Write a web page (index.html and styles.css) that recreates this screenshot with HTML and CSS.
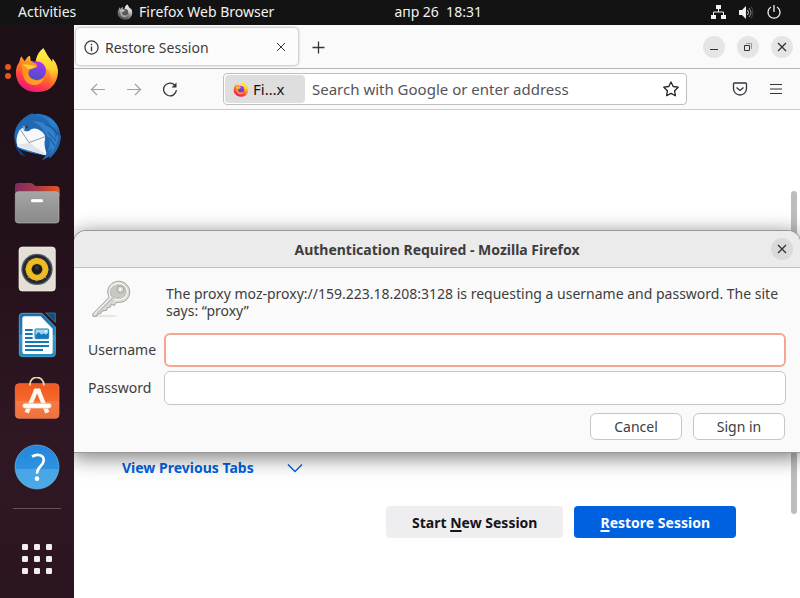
FILE: index.html
```html
<!DOCTYPE html>
<html lang="en">
<head>
<meta charset="utf-8">
<title>Restore Session</title>
<link rel="stylesheet" href="styles.css">
</head>
<body>
<svg class="defs" aria-hidden="true">
  <defs>
    <linearGradient id="fire" x1=".75" y1="0" x2=".3" y2="1"><stop offset="0" stop-color="#fff44f"/><stop offset=".3" stop-color="#ffbd2e"/><stop offset=".6" stop-color="#ff6a2b"/><stop offset=".82" stop-color="#ff3350"/><stop offset="1" stop-color="#e31587"/></linearGradient>
    <linearGradient id="flame" x1="0" y1="0" x2="0" y2="1"><stop offset="0" stop-color="#fff14a"/><stop offset=".55" stop-color="#ffd02e"/><stop offset="1" stop-color="#ff7139" stop-opacity=".2"/></linearGradient>
    <linearGradient id="globe" x1=".7" y1="0" x2=".4" y2="1"><stop offset="0" stop-color="#b833e1"/><stop offset=".5" stop-color="#7542e5"/><stop offset="1" stop-color="#4a4fb5"/></linearGradient>
    <linearGradient id="fox" x1="0" y1="0" x2="1" y2="1"><stop offset="0" stop-color="#ff8a16"/><stop offset="1" stop-color="#ffb42a"/></linearGradient>
    <symbol id="firefox" viewBox="46 66 130 138">
      <path fill="url(#fire)" d="M64 94 74 109Q81 94 90 92L92 107Q99 109 106 112L110 97Q114 84 130 70L136 80Q142 91 145 95L157 112L158 101Q174 119 174 141Q173 172 151 190Q133 203 105 201Q74 199 57 176Q46 158 48 135Q50 121 58 111Q60 101 64 94Z"/>
      <path fill="url(#flame)" d="M130 70 136 80Q142 91 145 95L157 112L158 101Q177 125 171 155Q165 178 146 185Q160 160 146 138Q138 126 118 116L108 110Q111 84 130 70Z"/>
      <circle cx="110" cy="137" r="28" fill="url(#globe)"/>
      <path fill="url(#fox)" d="M64 110Q80 104 91 110L106 115Q114 122 110 127Q99 131 90 133Q80 147 92 159Q111 174 133 158Q124 181 99 180Q74 175 69 149Q65 128 64 110Z" opacity=".92"/>
      <path fill="#ffcf35" d="M64 119Q83 116 109 124Q96 133 83 133Q80 124 64 119Z"/>
    </symbol>
    <linearGradient id="tb" x1="0" y1="0" x2="1" y2="1"><stop offset="0" stop-color="#1761ab"/><stop offset=".55" stop-color="#2c83d4"/><stop offset="1" stop-color="#102d77"/></linearGradient>
    <linearGradient id="folder"><stop stop-color="#812b62"/><stop offset=".5" stop-color="#a73b48"/><stop offset="1" stop-color="#e95420"/></linearGradient>
    <linearGradient id="metal" x2="0" y2="1"><stop stop-color="#a5a5a5"/><stop offset="1" stop-color="#898989"/></linearGradient>
    <linearGradient id="writer" x2="0" y2="1"><stop stop-color="#1a6eaa"/><stop offset=".5" stop-color="#2283bb"/><stop offset=".51" stop-color="#379fce"/><stop offset="1" stop-color="#2589be"/></linearGradient>
    <linearGradient id="bag" x2="0" y2="1"><stop stop-color="#ed581f"/><stop offset=".5" stop-color="#f56a2c"/><stop offset=".51" stop-color="#f57b45"/><stop offset="1" stop-color="#ee713d"/></linearGradient>
    <linearGradient id="help" x2="0" y2="1"><stop stop-color="#2385dc"/><stop offset=".54" stop-color="#2c93df"/><stop offset=".55" stop-color="#49a5e5"/><stop offset="1" stop-color="#4baae7"/></linearGradient>
    <radialGradient id="cone"><stop offset=".3" stop-color="#cda012"/><stop offset=".65" stop-color="#f0bf25"/><stop offset="1" stop-color="#e8b51e"/></radialGradient>
    <linearGradient id="keymetal" x1="0" y1="0" x2="1" y2="1"><stop stop-color="#fafaf8"/><stop offset=".5" stop-color="#d5d5d0"/><stop offset="1" stop-color="#eeeeeb"/></linearGradient>
    <symbol id="close" viewBox="0 0 16 16"><path d="M4 4 12 12M12 4 4 12" fill="none" stroke="currentColor"/></symbol>
  </defs>
</svg>

<header class="topbar">
  <button class="activities">Activities</button>
  <button class="app-menu"><svg class="app-icon" aria-hidden="true"><use href="#firefox"/></svg>Firefox Web Browser</button>
  <time class="clock">апр 26&nbsp; 18:31</time>
  <div class="status">
    <svg viewBox="0 0 16 16" aria-hidden="true"><path fill="#f2f2f2" d="M6 1h5v4H6zM1 11h5v4H1zM11 11h5v4h-5z"/><path d="M8.500 5v3M3.500 11V8h10v3" fill="none" stroke="#f2f2f2"/></svg>
    <svg viewBox="0 0 16 16" aria-hidden="true"><path fill="#f2f2f2" d="M1 6h3l4-4v13l-4-4H1z"/><path d="M9.500 6q2 2.500 0 5" fill="none" stroke="#ddd"/><path d="M11 4q4 4.500 0 9" fill="none" stroke="#999"/><path d="M13 2.500q4 6 0 12" fill="none" stroke="#444"/></svg>
    <svg viewBox="0 0 16 16" aria-hidden="true"><path d="M8 1v7M5 3a6 6 0 1 0 6 0" fill="none" stroke="#f2f2f2" stroke-width="1.300"/></svg>
  </div>
</header>

<div class="desktop">
  <nav class="dock" aria-label="Dock">
    <button class="launcher running" aria-label="Firefox"><svg viewBox="39 66 144 144"><use href="#firefox" x="46" y="66" width="130" height="138"/></svg></button>
    <button class="launcher" aria-label="Thunderbird"><svg viewBox="39 264 144 144">
      <circle cx="112" cy="335" r="69" fill="url(#tb)"/>
      <path fill="#21121b" d="M48 366Q75 383 139 392L124 412H60Z"/>
      <path fill="#173d89" d="M46 337Q41 367 62 389L78 394Q61 381 55 366L48 350Z"/>
      <path fill="#f7f8fa" d="M57 318Q61 309 75 308L127 309Q138 317 135 343Q130 359 140 386L136 391Q83 376 53 366Q44 344 57 318Z"/>
      <path fill="#e1e4ea" d="M50 360 88 353 136 386V391Q90 378 50 360Z"/>
      <path d="M60 312 87 353 138 334" fill="none" stroke="#959aa2" stroke-width="3"/>
      <path fill="#2268b1" d="M85 270 99 264Q96 269 109 273Q139 277 151 298Q172 315 183 333Q181 365 162 387L148 402L149 393L125 407L137 391Q149 370 136 354Q142 326 117 314Q98 306 88 317Q76 321 71 316L75 308Q55 305 61 293Q70 278 85 270Z"/>
      <path fill="#3c92dc" d="M97 288Q132 289 151 306Q168 320 165 342L176 325Q171 370 151 388L157 370L144 379Q157 350 139 330Q127 303 97 288Z" opacity=".6"/>
      <path d="M135 298Q153 303 177 330M143 321 168 348M147 337 165 363" fill="none" stroke="#164e9a" stroke-width="3"/>
      <path fill="#79a8c5" d="M67 302 76 304 73 320Z"/><circle cx="80" cy="306" r="4" fill="#223d4f"/>
    </svg></button>
    <button class="launcher" aria-label="Files"><svg viewBox="39 27 144 144">
      <path fill="url(#folder)" d="M45 77V49Q45 39 55 39H91Q99 39 106 48H168Q179 48 179 60V77Z"/>
      <rect x="46" y="65" width="131" height="94" rx="9" fill="url(#metal)" stroke="#b5b5b5" stroke-width="2"/>
      <rect x="92" y="86" width="38" height="12" rx="4" fill="#fff" stroke="#888" stroke-width="2"/>
    </svg></button>
    <button class="launcher" aria-label="Rhythmbox"><svg viewBox="39 225 144 144">
      <rect x="57" y="231" width="109" height="132" rx="10" fill="#e5e0d6" stroke="#f7f4ee" stroke-width="2"/>
      <circle cx="111" cy="298" r="47" fill="#555c66"/><circle cx="111" cy="298" r="43" fill="#242833"/>
      <circle cx="111" cy="298" r="34" fill="url(#cone)"/><circle cx="111" cy="298" r="16" fill="#1b1c20"/><circle cx="111" cy="293" r="7" fill="#33353a"/>
      <path d="M108 266v-3M133 275l2-2M143 298h3M135 321l3 3M109 331v3M86 321l-3 3M78 298h-3M87 275l-3-3" stroke="#ffde60" stroke-width="2"/>
    </svg></button>
    <button class="launcher" aria-label="LibreOffice Writer"><svg viewBox="39 33 144 144">
      <path fill="url(#writer)" stroke="#45a3d2" stroke-width="3" d="M68 40H126L166 81V161Q166 170 157 170H68Q58 170 58 161V49Q58 40 68 40Z"/>
      <path fill="#fff" d="M73 49H122L158 86V157Q158 162 152 162H73Q67 162 67 156V55Q67 49 73 49Z"/>
      <path fill="#0e4f7b" stroke="#4493bf" stroke-width="2" d="M137 39H166V67Z"/>
      <path stroke="#1278b5" stroke-width="6" d="M75 90H98M75 102H98M75 114H98M75 126H147M75 138H147M75 150H129"/>
      <rect x="105" y="87" width="41" height="29" rx="3" fill="#a7d4ed" stroke="#147ab4" stroke-width="3"/>
      <path fill="#147ab4" d="M107 115V105L116 96 124 104 131 100 137 104 145 98V115Z"/><circle cx="137" cy="94" r="3" fill="#fff"/>
    </svg></button>
    <button class="launcher" aria-label="Ubuntu Software"><svg viewBox="39 231 144 144">
      <rect x="46" y="251" width="131" height="104" rx="11" fill="url(#bag)" stroke="#ff8458" stroke-width="2"/>
      <path d="M90 257C86 226 132 222 132 257" fill="none" stroke="#efd8aa" stroke-width="5"/>
      <path d="M80 338 108 272H115L142 338" fill="none" stroke="#fff7ee" stroke-width="13"/>
      <path fill="#fff7ee" d="M102 267H121L124 279H99Z"/>
      <rect x="68" y="310" width="86" height="15" rx="7" fill="#fff" stroke="#f4a17d" stroke-width="2"/>
    </svg></button>
    <button class="launcher" aria-label="Help"><svg viewBox="39 39 144 144">
      <circle cx="111" cy="111" r="66" fill="url(#help)" stroke="#69bced" stroke-width="2"/>
      <path d="M96 80C111 70 133 74 131 92C130 109 110 110 111 131" fill="none" stroke="#fff" stroke-width="8"/><circle cx="111" cy="146" r="7" fill="#fff"/>
    </svg></button>
    <hr class="dock-rule">
    <button class="launcher" aria-label="Show Applications"><svg viewBox="39 315 144 144" fill="#f2f0ef">
      <rect x="66" y="342" width="18" height="18" rx="4"/><rect x="102" y="342" width="18" height="18" rx="4"/><rect x="138" y="342" width="18" height="18" rx="4"/>
      <rect x="66" y="378" width="18" height="18" rx="4"/><rect x="102" y="378" width="18" height="18" rx="4"/><rect x="138" y="378" width="18" height="18" rx="4"/>
      <rect x="66" y="414" width="18" height="18" rx="4"/><rect x="102" y="414" width="18" height="18" rx="4"/><rect x="138" y="414" width="18" height="18" rx="4"/>
    </svg></button>
  </nav>

  <section class="browser">
    <div class="tabstrip">
      <div class="tab">
        <svg viewBox="0 0 16 16" aria-hidden="true"><circle cx="8" cy="8" r="7" fill="none" stroke="#35343c" stroke-width="1.300"/><path d="M8 7v5M8 4v1.500" stroke="#35343c" stroke-width="1.400"/></svg>
        <span class="tab-title">Restore Session</span>
        <button class="icon-button" aria-label="Close tab"><svg viewBox="0 0 16 16"><use href="#close"/></svg></button>
      </div>
      <button class="icon-button new-tab" aria-label="New tab"><svg viewBox="0 0 16 16"><path d="M8.500 2.500v12M2.500 8.500h12" stroke="#35343c" stroke-width="1.300"/></svg></button>
      <div class="window-controls">
        <button class="round" aria-label="Minimize"><svg viewBox="0 0 16 16"><path d="M4 10.500h8" stroke="#333"/></svg></button>
        <button class="round" aria-label="Restore"><svg viewBox="0 0 16 16"><path d="M6 4.500h5.500V10" fill="none" stroke="#999"/><path d="M4.500 6.500h5v5h-5z" fill="none" stroke="#333"/></svg></button>
        <button class="round" aria-label="Close window"><svg viewBox="0 0 16 16"><path d="M4 4 12 12M12 4 4 12" stroke="#333" stroke-width="1.300"/></svg></button>
      </div>
    </div>

    <div class="toolbar">
      <button class="icon-button dim" aria-label="Back"><svg viewBox="0 0 16 16"><path d="M15 8.500H1.500M7 3 1.500 8.500 7 14" fill="none" stroke="currentColor" stroke-width="1.200"/></svg></button>
      <button class="icon-button dim" aria-label="Forward"><svg viewBox="0 0 16 16"><path d="M1 8.500h13.500M9 3 14.500 8.500 9 14" fill="none" stroke="currentColor" stroke-width="1.200"/></svg></button>
      <button class="icon-button" aria-label="Reload"><svg viewBox="0 0 16 16"><path d="M12.800 4.200A6.400 6.400 0 1 0 14.400 9" fill="none" stroke="currentColor" stroke-width="1.300"/><path d="M14.500 1.500v5h-5z" fill="currentColor"/></svg></button>
      <div class="urlbar">
        <button class="identity"><svg aria-hidden="true"><use href="#firefox"/></svg>Fi…x</button>
        <input class="url" type="text" placeholder="Search with Google or enter address" aria-label="Address">
        <button class="icon-button" aria-label="Bookmark"><svg viewBox="0 0 16 16"><path d="M8 1 10.200 5.500 15.200 6.200 11.600 9.700 12.400 14.800 8 12.400 3.600 14.800 4.400 9.700.8 6.200 5.800 5.500Z" fill="none" stroke="#222" stroke-width="1.300" stroke-linejoin="round"/></svg></button>
      </div>
      <div class="tools">
        <button class="icon-button" aria-label="Save to Pocket"><svg viewBox="0 0 16 16"><path d="M2.500 2h11q1 0 1 1v4.500a6.500 6.500 0 0 1-13 0V3q0-1 1-1ZM4.500 6.500 8 9.500 11.500 6.500" fill="none" stroke="currentColor" stroke-width="1.300"/></svg></button>
        <button class="icon-button" aria-label="Menu"><svg viewBox="0 0 16 16"><path d="M2 3.500h12M2 8h12M2 12.500h12" stroke="currentColor" stroke-width="1.200"/></svg></button>
      </div>
    </div>

    <main class="page">
      <button class="previous-tabs">View Previous Tabs<svg viewBox="0 0 16 16" aria-hidden="true"><path d="M1 4.500 8 11.500 15 4.500" fill="none" stroke="currentColor" stroke-width="1.400"/></svg></button>
      <div class="page-actions">
        <button class="action">Start <u>N</u>ew Session</button>
        <button class="action primary"><u>R</u>estore Session</button>
      </div>
      <div class="scroll-thumb"></div>

      <form class="dialog" role="dialog" aria-labelledby="dialog-title">
        <div class="dialog-bar">
          <h1 id="dialog-title">Authentication Required - Mozilla Firefox</h1>
          <button class="round" type="button" aria-label="Close"><svg viewBox="0 0 16 16"><path d="M4 4 12 12M12 4 4 12" stroke="#333" stroke-width="1.300"/></svg></button>
        </div>
        <div class="dialog-body">
          <svg class="key" viewBox="65 160 120 120" aria-hidden="true">
            <ellipse cx="106" cy="271" rx="38" ry="4" fill="#ddd" opacity=".7"/>
            <path d="M70 265 119 215Q108 189 128 173Q148 160 168 173Q187 190 179 212Q169 233 142 230L135 240 127 235 122 245 114 245 112 254 98 256 94 264 85 265 82 272H71Z" fill="url(#keymetal)" stroke="#a2a39e" stroke-width="3"/>
            <path d="M74 267 123 217Q114 194 131 179Q148 169 164 178Q179 192 171 209Q160 225 136 223" fill="none" stroke="#fff" stroke-width="3"/>
            <path d="M124 209Q118 192 132 182Q151 171 165 185Q175 197 167 209Q155 222 138 215Z" fill="#c9c9c4" stroke="#b0b1ac" stroke-width="2"/>
            <circle cx="153" cy="191" r="10" fill="#eee" stroke="#999a95" stroke-width="3"/><circle cx="153" cy="191" r="5" fill="#fff" stroke="#bbb" stroke-width="2"/>
            <path d="M83 263 132 216" stroke="#b3b4af" stroke-width="3"/>
          </svg>
          <p class="message">The proxy moz-proxy://159.223.18.208:3128 is requesting a username and password. The site says: “proxy”</p>
          <label for="username">Username</label>
          <input class="field focused" id="username" type="text">
          <label for="password">Password</label>
          <input class="field" id="password" type="password">
        </div>
        <div class="dialog-actions">
          <button class="dialog-button" type="button">Cancel</button>
          <button class="dialog-button" type="button">Sign in</button>
        </div>
      </form>
    </main>
  </section>
</div>
</body>
</html>
```
FILE: styles.css
```css
* { box-sizing: border-box; }
body {
  margin: 0;
  min-height: 100vh;
  display: flex;
  flex-direction: column;
  overflow: hidden;
  font: 14px/17px "Noto Sans", sans-serif;
  color: #3d3d3d;
}
button, input { font: inherit; color: inherit; }
button { border: 0; padding: 0; margin: 0; background: none; }
svg { display: block; flex: none; }
.defs { position: absolute; width: 0; height: 0; }

.topbar {
  display: grid;
  grid-template-columns: 56px auto 1fr auto;
  align-items: center;
  height: 25px;
  padding: 0 18px 2px;
  background: #131313;
  color: #f2f2f2;
}
.activities { white-space: nowrap; text-align: left; }
.app-menu { display: flex; align-items: center; gap: 6px; margin-left: 43px; }
.app-icon { width: 16px; height: 16px; filter: grayscale(1); }
.clock { margin-left: 120px; }
.status { display: flex; gap: 12px; }
.status svg { width: 16px; height: 16px; }

.desktop { flex: 1; display: flex; }
.dock {
  width: 74px;
  flex: none;
  padding-top: 13px;
  display: flex;
  flex-direction: column;
  align-items: center;
  background: linear-gradient(#1d1017, #24111b 40%, #301724 75%, #2b1520);
}
.launcher { position: relative; width: 100%; height: 66px; display: grid; place-items: center; }
.launcher svg { width: 48px; height: 48px; }
.running::before {
  content: "";
  position: absolute;
  left: 5px;
  top: 26px;
  width: 6px;
  height: 6px;
  border-radius: 50%;
  background: #e95420;
  box-shadow: 0 9px #e95420;
}
.dock-rule { width: 48px; height: 1px; margin: 8px 0 17px; border: 0; background: #655159; }

.browser { flex: 1; min-width: 0; display: flex; flex-direction: column; background: #fff; }
.tabstrip {
  display: flex;
  align-items: center;
  height: 44px;
  padding: 0 7px 0 2px;
  background: #fafafa;
  border-bottom: 1px solid #b5b5b5;
}
.tab {
  display: flex;
  align-items: center;
  gap: 6px;
  width: 222px;
  height: 37px;
  padding: 1px 9px 0 8px;
  border-radius: 4px;
  background: #fcfcfc;
  box-shadow: 0 0 3px #8c8c8c;
}
.tab > svg { width: 15px; height: 15px; }
.tab-title { flex: 1; }
.icon-button { display: grid; place-items: center; color: #35343c; }
.icon-button svg { width: 16px; height: 16px; }
.new-tab { margin-left: 12px; }
.window-controls { display: flex; gap: 12px; margin-left: auto; }
.round { width: 22px; height: 22px; border-radius: 50%; display: grid; place-items: center; background: #e5e5e5; }
.round svg { width: 16px; height: 16px; }

.toolbar {
  display: flex;
  align-items: center;
  gap: 20px;
  height: 41px;
  padding: 0 16px;
  background: #fafafa;
  border-bottom: 1px solid #ccc;
}
.dim { color: #a0a0a3; }
.urlbar {
  flex: 1;
  display: flex;
  align-items: center;
  height: 32px;
  margin: 0 25px;
  padding: 0 7px 0 1px;
  font-size: 15px;
  background: #fff;
  border: 1px solid #bfbfbf;
  border-radius: 4px;
}
.identity {
  display: flex;
  align-items: center;
  gap: 4px;
  width: 80px;
  height: 28px;
  padding-left: 8px;
  border-radius: 4px;
  background: #dedede;
  color: #15141a;
}
.identity svg { width: 16px; height: 16px; }
.url { flex: 1; min-width: 0; height: 28px; border: 0; padding: 0 7px; line-height: 22px; background: none; outline: 0; }
.url::placeholder { color: #545458; opacity: 1; }
.tools { display: flex; gap: 20px; }

.page {
  position: relative;
  flex: 1;
  display: flex;
  flex-direction: column;
  justify-content: flex-end;
  gap: 30px;
  padding: 0 64px 60px 48px;
}
.previous-tabs { display: flex; align-items: center; gap: 33px; align-self: flex-start; font-weight: bold; color: #0061e0; }
.previous-tabs svg { width: 16px; height: 16px; }
.page-actions { display: flex; justify-content: flex-end; gap: 11px; }
.action { height: 32px; padding: 0 26px; border-radius: 4px; font-weight: bold; background: #eeeef0; color: #15141a; }
.action u { text-decoration-thickness: 2px; text-underline-offset: 2px; }
.primary { background: #0061e0; color: #fbfbfe; }
.scroll-thumb { position: absolute; top: 81px; right: 3px; width: 6px; height: 323px; border-radius: 3px; background: #bdbdbd; }

.dialog {
  position: absolute;
  top: 121px;
  left: 0;
  right: 0;
  background: #fafafa;
  border-radius: 12px 12px 0 0;
  box-shadow: 0 0 0 1px #999, 0 4px 20px 2px #00000080;
  clip-path: inset(-40px 0 -50px 0);
}
.dialog-bar {
  display: grid;
  grid-template-columns: 22px 1fr 22px;
  align-items: center;
  height: 37px;
  padding: 0 7px;
  background: #ebebeb;
  border-bottom: 1px solid #bfbfbf;
  border-radius: 12px 12px 0 0;
}
.dialog-bar h1 { grid-column: 2; margin: 0; font-size: 14px; text-align: center; }
.dialog-bar .round { background: #dadada; }
.dialog-body {
  display: grid;
  grid-template-columns: 76px 1fr;
  grid-template-rows: 61px 34px 34px;
  row-gap: 4px;
  align-items: center;
  padding: 0 14px;
}
.key { width: 40px; height: 40px; margin-left: 3px; }
.message { margin: 0; padding: 6px 0 0 2px; }
.dialog-body label { padding-bottom: 2px; }
.field { width: 100%; height: 34px; padding: 0 8px; border: 1px solid #c6c6c6; border-radius: 6px; background: #fff; outline: 0; }
.focused { border: 2px solid #f4a790; }
.dialog-actions { display: flex; justify-content: flex-end; gap: 11px; padding: 8px 15px 12px; }
.dialog-button { width: 92px; height: 27px; border: 1px solid #c6c6c6; border-radius: 6px; background: #fff; }
```
